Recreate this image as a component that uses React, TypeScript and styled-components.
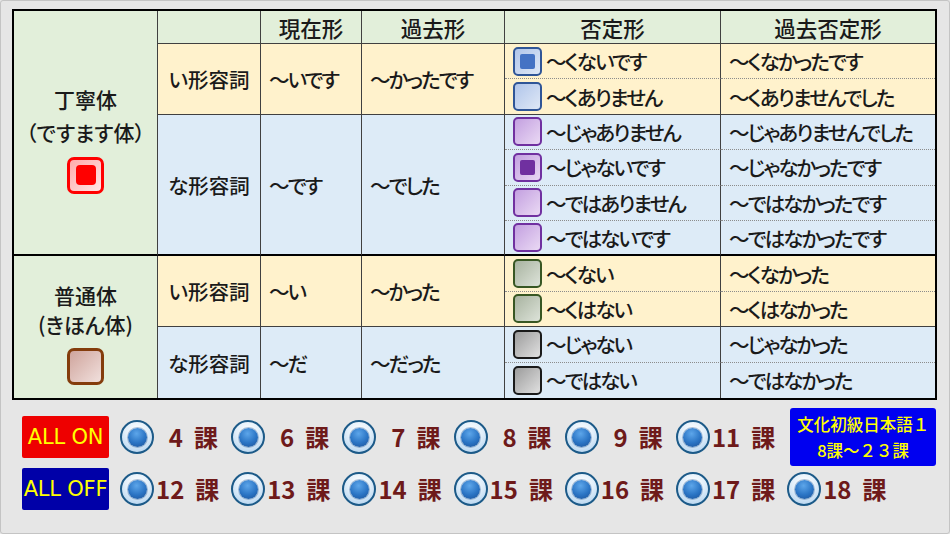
import React from 'react';
import styled, { createGlobalStyle } from 'styled-components';

const GlobalStyle = createGlobalStyle`
  html, body { margin: 0; padding: 0; background: #e6e6e6; }
  body { font-family: "Noto Sans CJK JP", "Noto Sans", sans-serif; }
`;

const GREEN = '#e2efda';
const YELLOW = '#fff2cc';
const BLUE = '#ddebf7';

type Edge = 'solid' | 'dotted' | 'thick' | 'none';
const edge = (e: Edge) =>
  e === 'solid' ? '1px solid #404040' : e === 'dotted' ? '1px dotted #8c8c8c' : e === 'thick' ? '2px solid #000' : 'none';

const Frame = styled.div`
  box-sizing: border-box;
  width: 950px;
  height: 534px;
  border: 1px solid #c4c4c4;
  border-radius: 3px;
  background: #e6e6e6;
  padding: 8px 0 0 11px;
  display: flex;
  flex-direction: column;
`;

const Table = styled.div`
  box-sizing: border-box;
  width: 925px;
  height: 391px;
  border: 2px solid #000;
  display: grid;
  grid-template-columns: 144px 103px 101px 143px 216px 214px;
  grid-template-rows: 33px repeat(10, 1fr);
  font-size: 20.5px;
  font-weight: 500;
  letter-spacing: -1.9px;
  color: #1a1a1a;
  font-feature-settings: "palt";
  background: #fff;
`;

const Cell = styled.div<{ $bg: string; $col: string; $row: string; $bottom?: Edge; $last?: boolean; $center?: boolean }>`
  grid-column: ${p => p.$col};
  grid-row: ${p => p.$row};
  background: ${p => p.$bg};
  box-sizing: border-box;
  border-right: ${p => (p.$last ? 'none' : '1px solid #404040')};
  border-bottom: ${p => edge(p.$bottom ?? 'solid')};
  display: flex;
  align-items: center;
  justify-content: ${p => (p.$center ? 'center' : 'flex-start')};
  padding-left: ${p => (p.$center ? '0' : '8px')};
  gap: 4px;
  white-space: nowrap;
  overflow: hidden;
`;

const HeadCell = styled(Cell)`
  font-size: 21.5px;
  letter-spacing: 0;
  padding-top: 1px;
`;

const KindCell = styled(Cell)`
  font-size: 20.5px;
  letter-spacing: 0;
`;

const StyleCell = styled(Cell)`
  flex-direction: column;
  justify-content: center;
  align-items: center;
  padding: 11px 0 0;
  gap: 0;
  font-size: 21px;
  letter-spacing: 0;
`;

const StyleLine = styled.div<{ $lh: number }>`
  line-height: ${p => p.$lh}px;
`;

type Tone = { border: string; from: string; to: string; mark: string };
const TONES: Record<string, Tone> = {
  red: { border: '#ff0000', from: '#ffaaaa', to: '#ffe6e6', mark: '#ff0000' },
  brown: { border: '#843c0c', from: '#cfa49c', to: '#f1e0dd', mark: '#843c0c' },
  blue: { border: '#2f5597', from: '#b0c5ea', to: '#dfe8f6', mark: '#4472c4' },
  purple: { border: '#7030a0', from: '#c3a0e0', to: '#ead9f4', mark: '#7030a0' },
  green: { border: '#385723', from: '#a8b3a0', to: '#dde3d9', mark: '#385723' },
  black: { border: '#1a1a1a', from: '#9c9c9c', to: '#e0e0e0', mark: '#1a1a1a' },
};

const Box = styled.span<{ $tone: Tone; $size: number }>`
  flex: none;
  box-sizing: border-box;
  width: ${p => p.$size}px;
  height: ${p => p.$size}px;
  border: ${p => (p.$size > 32 ? 3 : 2)}px solid ${p => p.$tone.border};
  border-radius: ${p => (p.$size > 32 ? 7 : 5)}px;
  background: linear-gradient(135deg, ${p => p.$tone.from}, ${p => p.$tone.to});
  display: flex;
  align-items: center;
  justify-content: center;
`;

const Mark = styled.span<{ $tone: Tone; $size: number }>`
  width: ${p => p.$size}px;
  height: ${p => p.$size}px;
  background: ${p => p.$tone.mark};
  border-radius: ${p => (p.$size > 16 ? 4 : 2)}px;
`;

const CheckBox: React.FC<{ tone: string; checked?: boolean; big?: boolean }> = ({ tone, checked, big }) => {
  const t = TONES[tone];
  return (
    <Box $tone={t} $size={big ? 37 : 29}>
      {checked && <Mark $tone={t} $size={big ? 20 : 15} />}
    </Box>
  );
};

const Controls = styled.div`
  margin: 16px 0 0 10px;
  display: grid;
  grid-template-columns: 98px repeat(6, 111.2px) auto;
  grid-template-rows: 42px 42px;
  row-gap: 10px;
  align-items: center;
`;

const AllButton = styled.div<{ $bg: string }>`
  box-sizing: border-box;
  width: 87px;
  height: 42px;
  background: ${p => p.$bg};
  border-radius: 2px;
  color: #ffff00;
  font-family: "DejaVu Sans", sans-serif;
  font-size: 21px;
  display: flex;
  align-items: center;
  justify-content: center;
  white-space: nowrap;
  letter-spacing: -0.2px;
`;

const Lesson = styled.div`
  display: flex;
  align-items: center;
  gap: 2px;
  color: #6e1a1a;
  font-size: 24px;
  font-weight: 700;
`;

const Radio = styled.span`
  flex: none;
  box-sizing: border-box;
  width: 34px;
  height: 34px;
  border-radius: 50%;
  border: 2.5px solid #1c5a88;
  background: radial-gradient(circle at 50% 30%, #ffffff 0%, #e2effa 45%, #a9cdec 100%);
  display: flex;
  align-items: center;
  justify-content: center;
  &::after {
    content: '';
    width: 19px;
    height: 19px;
    border-radius: 50%;
    background: radial-gradient(circle at 45% 30%, #5da6ea 0%, #2a74c4 55%, #1b4f94 100%);
    box-shadow: 0 0 0 1px rgba(30, 80, 140, 0.35);
  }
`;

const LessonLabel = styled.span`
  display: flex;
  align-items: center;
  gap: 11px;
  line-height: 1;
`;

const LessonNum = styled.span`
  min-width: 27px;
  text-align: right;
`;

const TitleBox = styled.div`
  grid-column: 8;
  grid-row: 1;
  align-self: center;
  box-sizing: border-box;
  margin-left: 3px;
  width: 146px;
  height: 58px;
  background: #0000f0;
  border-radius: 3px;
  color: #ffff00;
  font-size: 16.5px;
  font-weight: 500;
  line-height: 26px;
  display: flex;
  flex-direction: column;
  align-items: center;
  justify-content: center;
  white-space: nowrap;
`;

type Row = { neg: string; past: string; checked?: boolean; bottom: Edge };
type Group = { kind: string; bg: string; present: string; past: string; tone: string; rows: Row[] };
type Section = { title: string; sub: string; tone: string; checked: boolean; groups: Group[]; lh: number };

const sections: Section[] = [
  {
    title: '丁寧体',
    sub: '（ですます体）',
    tone: 'red',
    checked: true,
    lh: 33,
    groups: [
      {
        kind: 'い形容詞', bg: YELLOW, present: '〜いです', past: '〜かったです', tone: 'blue',
        rows: [
          { neg: '〜くないです', past: '〜くなかったです', checked: true, bottom: 'dotted' },
          { neg: '〜くありません', past: '〜くありませんでした', bottom: 'solid' },
        ],
      },
      {
        kind: 'な形容詞', bg: BLUE, present: '〜です', past: '〜でした', tone: 'purple',
        rows: [
          { neg: '〜じゃありません', past: '〜じゃありませんでした', bottom: 'dotted' },
          { neg: '〜じゃないです', past: '〜じゃなかったです', checked: true, bottom: 'dotted' },
          { neg: '〜ではありません', past: '〜ではなかったです', bottom: 'dotted' },
          { neg: '〜ではないです', past: '〜ではなかったです', bottom: 'thick' },
        ],
      },
    ],
  },
  {
    title: '普通体',
    sub: '(きほん体)',
    tone: 'brown',
    checked: false,
    lh: 29,
    groups: [
      {
        kind: 'い形容詞', bg: YELLOW, present: '〜い', past: '〜かった', tone: 'green',
        rows: [
          { neg: '〜くない', past: '〜くなかった', bottom: 'dotted' },
          { neg: '〜くはない', past: '〜くはなかった', bottom: 'solid' },
        ],
      },
      {
        kind: 'な形容詞', bg: BLUE, present: '〜だ', past: '〜だった', tone: 'black',
        rows: [
          { neg: '〜じゃない', past: '〜じゃなかった', bottom: 'dotted' },
          { neg: '〜ではない', past: '〜ではなかった', bottom: 'none' },
        ],
      },
    ],
  },
];

const headers = ['現在形', '過去形', '否定形', '過去否定形'];
const row1 = [4, 6, 7, 8, 9, 11];
const row2 = [12, 13, 14, 15, 16, 17, 18];

const LessonItem: React.FC<{ n: number }> = ({ n }) => (
  <Lesson>
    <Radio />
    <LessonLabel>
      <LessonNum>{n}</LessonNum>
      <span>課</span>
    </LessonLabel>
  </Lesson>
);

export default function App() {
  const cells: React.ReactNode[] = [];
  cells.push(<HeadCell key="h0" $bg={GREEN} $col="2" $row="1" />);
  headers.forEach((h, i) => {
    cells.push(
      <HeadCell key={`h${i + 1}`} $bg={GREEN} $col={`${i + 3}`} $row="1" $center $last={i === 3}>
        {h}
      </HeadCell>
    );
  });

  let r = 2;
  sections.forEach((s, si) => {
    const start = si === 0 ? 1 : r;
    const total = s.groups.reduce((a, g) => a + g.rows.length, 0);
    const end = r + total;
    cells.push(
      <StyleCell key={`s${si}`} $bg={GREEN} $col="1" $row={`${start} / ${end}`} $bottom={si === 0 ? 'thick' : 'none'} $center>
        <StyleLine $lh={s.lh}>{s.title}</StyleLine>
        <StyleLine $lh={s.lh}>{s.sub}</StyleLine>
        <div style={{ height: si === 0 ? 8 : 9 }} />
        <CheckBox tone={s.tone} checked={s.checked} big />
      </StyleCell>
    );
    s.groups.forEach((g, gi) => {
      const gs = r;
      const ge = r + g.rows.length;
      const gb = g.rows[g.rows.length - 1].bottom === 'dotted' ? 'solid' : g.rows[g.rows.length - 1].bottom;
      cells.push(
        <KindCell key={`k${si}${gi}`} $bg={g.bg} $col="2" $row={`${gs} / ${ge}`} $bottom={gb} $center>
          {g.kind}
        </KindCell>,
        <Cell key={`p${si}${gi}`} $bg={g.bg} $col="3" $row={`${gs} / ${ge}`} $bottom={gb}>
          {g.present}
        </Cell>,
        <Cell key={`q${si}${gi}`} $bg={g.bg} $col="4" $row={`${gs} / ${ge}`} $bottom={gb}>
          {g.past}
        </Cell>
      );
      g.rows.forEach((row, ri) => {
        cells.push(
          <Cell key={`n${si}${gi}${ri}`} $bg={g.bg} $col="5" $row={`${r + ri}`} $bottom={row.bottom}>
            <CheckBox tone={g.tone} checked={row.checked} />
            {row.neg}
          </Cell>,
          <Cell key={`m${si}${gi}${ri}`} $bg={g.bg} $col="6" $row={`${r + ri}`} $bottom={row.bottom} $last>
            {row.past}
          </Cell>
        );
      });
      r = ge;
    });
  });

  return (
    <>
      <GlobalStyle />
      <Frame>
        <Table>{cells}</Table>
        <Controls>
          <AllButton $bg="#ee0000">ALL ON</AllButton>
          {row1.map(n => (
            <LessonItem key={n} n={n} />
          ))}
          <TitleBox>
            <div>文化初級日本語１</div>
            <div>8課～２３課</div>
          </TitleBox>
          <AllButton $bg="#0000a8">ALL OFF</AllButton>
          {row2.map(n => (
            <LessonItem key={n} n={n} />
          ))}
        </Controls>
      </Frame>
    </>
  );
}
